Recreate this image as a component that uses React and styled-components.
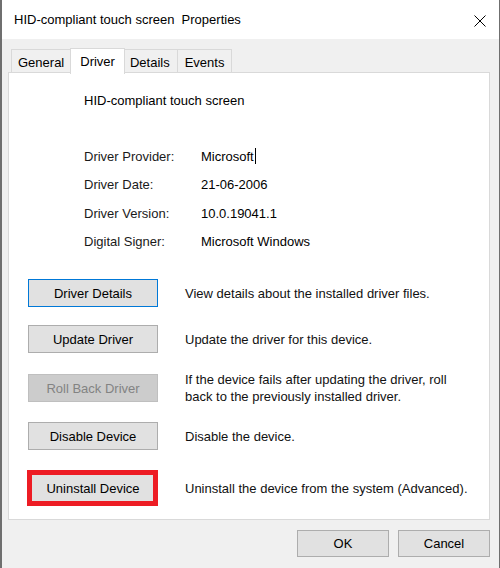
import React from "react";
import styled, { createGlobalStyle } from "styled-components";

const GlobalStyle = createGlobalStyle`
  html, body {
    margin: 0;
    padding: 0;
    background: #f0f0f0;
  }
  body {
    font-family: "Liberation Sans", Arial, sans-serif;
    font-size: 13px;
    color: #000;
  }
`;

const ACTIONS = [
  {
    label: "Driver Details",
    text: "View details about the installed driver files.",
    focused: true,
    gap: 18,
  },
  { label: "Update Driver", text: "Update the driver for this device.", gap: 18 },
  {
    label: "Roll Back Driver",
    text: "If the device fails after updating the driver, roll back to the previously installed driver.",
    disabled: true,
    gap: 23,
  },
  { label: "Disable Device", text: "Disable the device.", gap: 24 },
  {
    label: "Uninstall Device",
    text: "Uninstall the device from the system (Advanced).",
    highlighted: true,
    gap: 0,
  },
];

const INFO = [
  ["Driver Provider:", "Microsoft"],
  ["Driver Date:", "21-06-2006"],
  ["Driver Version:", "10.0.19041.1"],
  ["Digital Signer:", "Microsoft Windows"],
];

const TABS = ["General", "Driver", "Details", "Events"];

const App = () => {
  return (
    <>
      <GlobalStyle />
      <Window>
        <TitleBar>
          <Title>HID-compliant touch screen&nbsp; Properties</Title>
          <CloseButton aria-label="Close">
            <svg width="12" height="12" viewBox="0 0 12 12">
              <path d="M0.5 0.5 L11.5 11.5 M11.5 0.5 L0.5 11.5" stroke="#000" strokeWidth="1" />
            </svg>
          </CloseButton>
        </TitleBar>
        <Body>
          <TabStrip>
            {TABS.map((t) => (
              <Tab key={t} $active={t === "Driver"}>
                {t}
              </Tab>
            ))}
          </TabStrip>
          <Panel>
            <DeviceName>HID-compliant touch screen</DeviceName>
            <InfoGrid>
              {INFO.map(([k, v]) => (
                <React.Fragment key={k}>
                  <InfoLabel>{k}</InfoLabel>
                  <InfoValue>
                    {v}
                    {v === "Microsoft" && <Caret />}
                  </InfoValue>
                </React.Fragment>
              ))}
            </InfoGrid>
            <Actions>
              {ACTIONS.map((a) => (
                <ActionRow key={a.label} $gap={a.gap}>
                  {a.highlighted ? (
                    <Highlight>
                      <Button>{a.label}</Button>
                    </Highlight>
                  ) : (
                    <Button $focused={a.focused} disabled={a.disabled}>
                      {a.label}
                    </Button>
                  )}
                  <ActionText>{a.text}</ActionText>
                </ActionRow>
              ))}
            </Actions>
          </Panel>
          <Footer>
            <FooterButton>OK</FooterButton>
            <FooterButton>Cancel</FooterButton>
          </Footer>
        </Body>
      </Window>
    </>
  );
};

const Window = styled.div`
  width: 500px;
  height: 568px;
  box-sizing: border-box;
  border-left: 2px solid #6f6f6f;
  border-right: 1px solid #6f6f6f;
  display: flex;
  flex-direction: column;
  overflow: hidden;
`;

const TitleBar = styled.div`
  height: 39px;
  flex-shrink: 0;
  background: #fff;
  display: flex;
  align-items: center;
  justify-content: space-between;
  padding-left: 12px;
  padding-right: 13px;
`;

const Title = styled.div`
  font-size: 13px;
  margin-top: -1px;
`;

const CloseButton = styled.div`
  width: 12px;
  height: 12px;
  display: flex;
  margin-top: 2px;
`;

const Body = styled.div`
  flex: 1;
  background: #f0f0f0;
  padding: 9px 9px 0 6px;
  display: flex;
  flex-direction: column;
`;

const TabStrip = styled.div`
  display: flex;
  align-items: flex-end;
  height: 25px;
  padding-left: 3px;
  position: relative;
  z-index: 1;
  margin-bottom: -1px;
`;

const Tab = styled.div`
  box-sizing: border-box;
  height: ${(p) => (p.$active ? "26px" : "24px")};
  padding: 0 ${(p) => (p.$active ? "9px" : "7px")};
  margin: 0 ${(p) => (p.$active ? "-2px" : "0")};
  background: ${(p) => (p.$active ? "#fff" : "#f0f0f0")};
  border: 1px solid #d9d9d9;
  border-bottom: ${(p) => (p.$active ? "none" : "1px solid #d9d9d9")};
  border-left-width: ${(p) => (p.$active ? "1px" : "0")};
  display: flex;
  align-items: center;
  padding-top: ${(p) => (p.$active ? "0" : "2px")};
  margin-bottom: ${(p) => (p.$active ? "-1px" : "0")};
  position: relative;
  z-index: ${(p) => (p.$active ? 2 : 1)};

  &:first-child {
    border-left-width: 1px;
    padding: 2px 7px 0 6px;
  }
`;

const Panel = styled.div`
  height: 448px;
  box-sizing: border-box;
  background: #fff;
  border: 1px solid #d9d9d9;
  padding: 20px 0 0 19px;
  display: flex;
  flex-direction: column;
`;

const DeviceName = styled.div`
  line-height: 16px;
  padding-left: 56px;
`;

const InfoGrid = styled.div`
  display: grid;
  grid-template-columns: 117px auto;
  grid-auto-rows: 28.5px;
  align-items: center;
  margin-top: 33px;
  padding-left: 56px;
`;

const InfoLabel = styled.div`
  color: #1a1a1a;
`;

const InfoValue = styled.div`
  display: flex;
  align-items: center;
`;

const Caret = styled.span`
  display: inline-block;
  width: 1px;
  height: 16px;
  background: #000;
  margin-left: 1px;
`;

const Actions = styled.div`
  display: flex;
  flex-direction: column;
  margin-top: 23px;
`;

const ActionRow = styled.div`
  display: grid;
  grid-template-columns: 130px auto;
  column-gap: 27px;
  align-items: center;
  height: 28px;
  margin-bottom: ${(p) => p.$gap}px;
`;

const Button = styled.button`
  box-sizing: border-box;
  width: 130px;
  height: 28px;
  font-family: inherit;
  font-size: 13px;
  color: ${(p) => (p.disabled ? "#838383" : "#000")};
  background: ${(p) => (p.disabled ? "#cccccc" : "#e1e1e1")};
  border: 1px solid
    ${(p) => (p.$focused ? "#0078d7" : p.disabled ? "#bfbfbf" : "#adadad")};
  border-radius: 0;
  padding: 0;
  margin: 0;
`;

const Highlight = styled.div`
  position: relative;
  width: 130px;
  height: 28px;

  &::after {
    content: "";
    position: absolute;
    top: -4px;
    bottom: -4px;
    left: -1px;
    right: 0;
    border: 5px solid #ed1c24;
  }
`;

const ActionText = styled.div`
  line-height: 17px;
  color: #111;
  max-width: 290px;
`;

const Footer = styled.div`
  display: flex;
  justify-content: flex-end;
  gap: 9px;
  margin-top: 10px;
`;

const FooterButton = styled.button`
  box-sizing: border-box;
  width: 92px;
  height: 27px;
  font-family: inherit;
  font-size: 13px;
  color: #000;
  background: #e1e1e1;
  border: 1px solid #adadad;
  border-radius: 0;
  padding: 0;
`;

export default App;
